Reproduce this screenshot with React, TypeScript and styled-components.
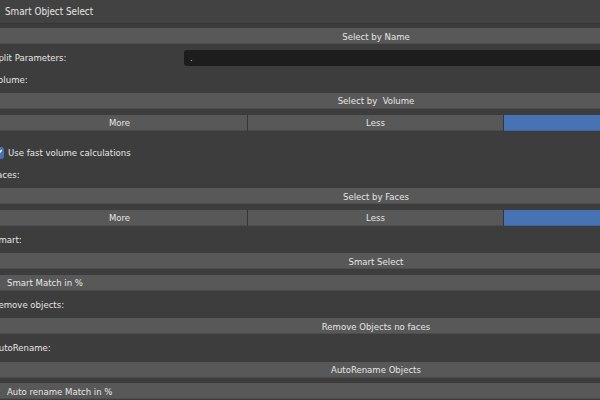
import React from 'react';
import styled, { createGlobalStyle } from 'styled-components';

const colors = {
    panel: '#3d3d3d',
    header: '#424242',
    button: '#585858',
    outline: '#363636',
    field: '#1d1d1d',
    text: '#e6e6e6',
    blue: '#4772b3',
};

const GlobalStyle = createGlobalStyle`
  html, body {
    margin: 0;
    background: ${colors.panel};
    overflow: hidden;
  }
  body {
    font-family: "DejaVu Sans Condensed", "DejaVu Sans", "Liberation Sans", sans-serif;
  }
`;

const Frame = styled.div`
  width: 600px;
  height: 400px;
  overflow: hidden;
  background: ${colors.panel};
  color: ${colors.text};
  font-size: 9.5px;
`;

// the panel is wider than the visible area and starts a little left of it
const Panel = styled.div`
  width: 768px;
  margin-left: -8px;
`;

const Header = styled.div`
  height: 24px;
  display: flex;
  align-items: center;
  padding-left: 13px;
  background: ${colors.header};
  border-bottom: 1px solid ${colors.outline};
  box-sizing: border-box;
  font-size: 9.8px;
`;

const Body = styled.div`
  display: flex;
  flex-direction: column;
  gap: 5.67px;
  padding-top: 4px;
`;

const Button = styled.div<{ $align?: 'left' | 'center' }>`
  height: 16px;
  display: flex;
  align-items: center;
  justify-content: ${p => (p.$align === 'left' ? 'flex-start' : 'center')};
  padding-left: ${p => (p.$align === 'left' ? '15px' : '0')};
  background: ${colors.button};
  border-radius: 3px;
  box-shadow: inset 0 -1px 0 rgba(0, 0, 0, 0.12);
  white-space: pre;
`;

const Segmented = styled.div`
  height: 16px;
  display: grid;
  grid-template-columns: repeat(3, 1fr);
  border-radius: 3px;
  overflow: hidden;
`;

const Segment = styled.div<{ $active?: boolean }>`
  display: flex;
  align-items: center;
  justify-content: center;
  background: ${p => (p.$active ? colors.blue : colors.button)};
  border-right: 1px solid ${colors.outline};
  box-shadow: inset 0 -1px 0 rgba(0, 0, 0, 0.12);
  &:last-child {
    border-right: none;
  }
`;

const Label = styled.div`
  height: 16px;
  display: flex;
  align-items: center;
  padding-left: 1px;
`;

const FieldRow = styled.div`
  height: 16px;
  display: grid;
  grid-template-columns: 1fr 3fr;
  align-items: center;
`;

const TextField = styled.div`
  height: 16px;
  display: flex;
  align-items: center;
  padding-left: 6px;
  background: ${colors.field};
  border-radius: 3px;
  color: #bdbdbd;
`;

const CheckRow = styled.label`
  height: 16px;
  display: flex;
  align-items: center;
  gap: 4px;
  margin-top: 8.7px;
`;

const CheckBox = styled.span`
  width: 12px;
  height: 12px;
  border-radius: 3px;
  background: ${colors.blue};
  display: flex;
  align-items: center;
  justify-content: center;
`;

const ChoiceRow = ({ active }: { active: number }) => (
    <Segmented>
        {['More', 'Less', ''].map((t, i) => (
            <Segment key={i} $active={i === active}>{t}</Segment>
        ))}
    </Segmented>
);

const App = () => {
    return (
        <>
            <GlobalStyle />
            <Frame>
                <Panel>
                    <Header>Smart Object Select</Header>
                    <Body>
                        <Button>Select by Name</Button>
                        <FieldRow>
                            <Label>Split Parameters:</Label>
                            <TextField>.</TextField>
                        </FieldRow>
                        <Label>Volume:</Label>
                        <Button>Select by  Volume</Button>
                        <ChoiceRow active={2} />
                        <CheckRow>
                            <CheckBox>
                                <svg width="9" height="9" viewBox="0 0 10 10">
                                    <path d="M1.5 5.2 L4 7.6 L8.6 2.2" fill="none" stroke="#fff" strokeWidth="1.6" />
                                </svg>
                            </CheckBox>
                            Use fast volume calculations
                        </CheckRow>
                        <Label>Faces:</Label>
                        <Button>Select by Faces</Button>
                        <ChoiceRow active={2} />
                        <Label>Smart:</Label>
                        <Button>Smart Select</Button>
                        <Button $align="left">Smart Match in %</Button>
                        <Label>Remove objects:</Label>
                        <Button>Remove Objects no faces</Button>
                        <Label>AutoRename:</Label>
                        <Button>AutoRename Objects</Button>
                        <Button $align="left">Auto rename Match in %</Button>
                    </Body>
                </Panel>
            </Frame>
        </>
    );
};

export default App;
